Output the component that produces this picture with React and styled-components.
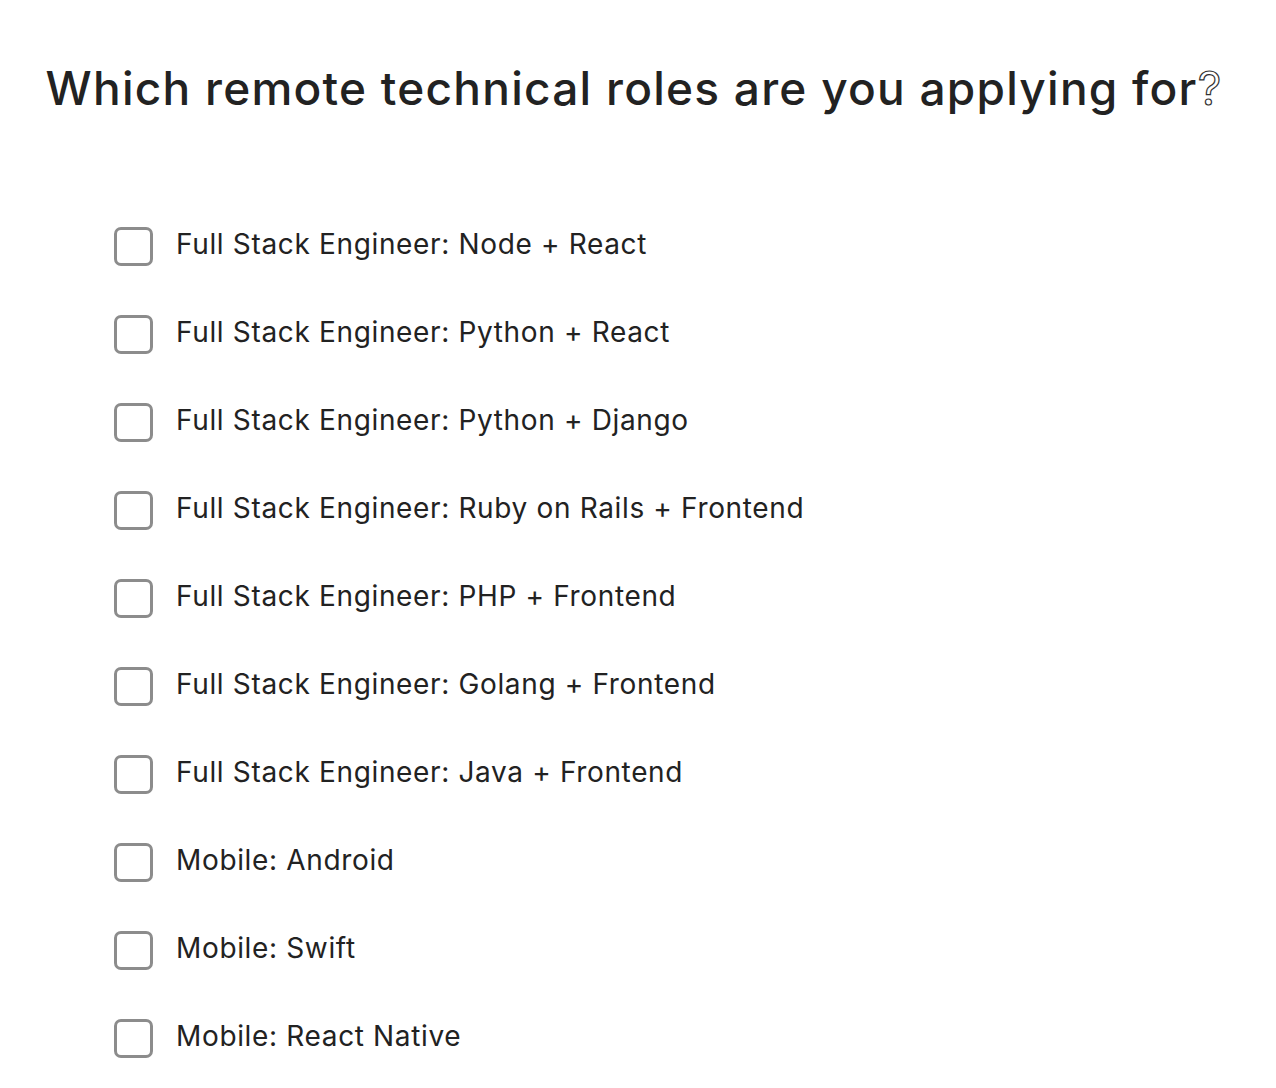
import styled, { createGlobalStyle } from 'styled-components';

const Global = createGlobalStyle`
  body {
    margin: 0;
    background: #ffffff;
    font-family: 'Inter', 'Liberation Sans', sans-serif;
    color: #222222;
  }
`;

const Page = styled.div`
  padding: 56px 0 0;
`;

const Title = styled.h1`
  margin: 0;
  padding-right: 8px;
  text-align: center;
  font-size: 46px;
  font-weight: 500;
  line-height: 64px;
  letter-spacing: 1.25px;
  color: #222222;
`;

const Hollow = styled.span`
  color: transparent;
  -webkit-text-stroke: 1.2px #333333;
  font-weight: 400;
`;

const List = styled.ul`
  list-style: none;
  margin: 107px 0 0;
  padding: 0 0 0 114px;
  display: flex;
  flex-direction: column;
  gap: 49px;
`;

const Row = styled.li`
  display: flex;
  align-items: center;
  gap: 23px;
  height: 39px;
`;

const Box = styled.span`
  box-sizing: border-box;
  width: 39px;
  height: 39px;
  border: 3px solid #8c8c8c;
  border-radius: 7px;
  flex-shrink: 0;
`;

const Label = styled.span`
  font-size: 28px;
  font-weight: 400;
  letter-spacing: 0.65px;
  color: #222222;
  line-height: 38px;
  margin-bottom: 5px;
`;

const roles = [
  'Full Stack Engineer: Node + React',
  'Full Stack Engineer: Python + React',
  'Full Stack Engineer: Python + Django',
  'Full Stack Engineer: Ruby on Rails + Frontend',
  'Full Stack Engineer: PHP + Frontend',
  'Full Stack Engineer: Golang + Frontend',
  'Full Stack Engineer: Java + Frontend',
  'Mobile: Android',
  'Mobile: Swift',
  'Mobile: React Native',
];

export default function App() {
  return (
    <Page>
      <Global />
      <Title>
        Which remote technical roles are you applying for<Hollow>?</Hollow>
      </Title>
      <List>
        {roles.map((r) => (
          <Row key={r}>
            <Box />
            <Label>{r}</Label>
          </Row>
        ))}
      </List>
    </Page>
  );
}
